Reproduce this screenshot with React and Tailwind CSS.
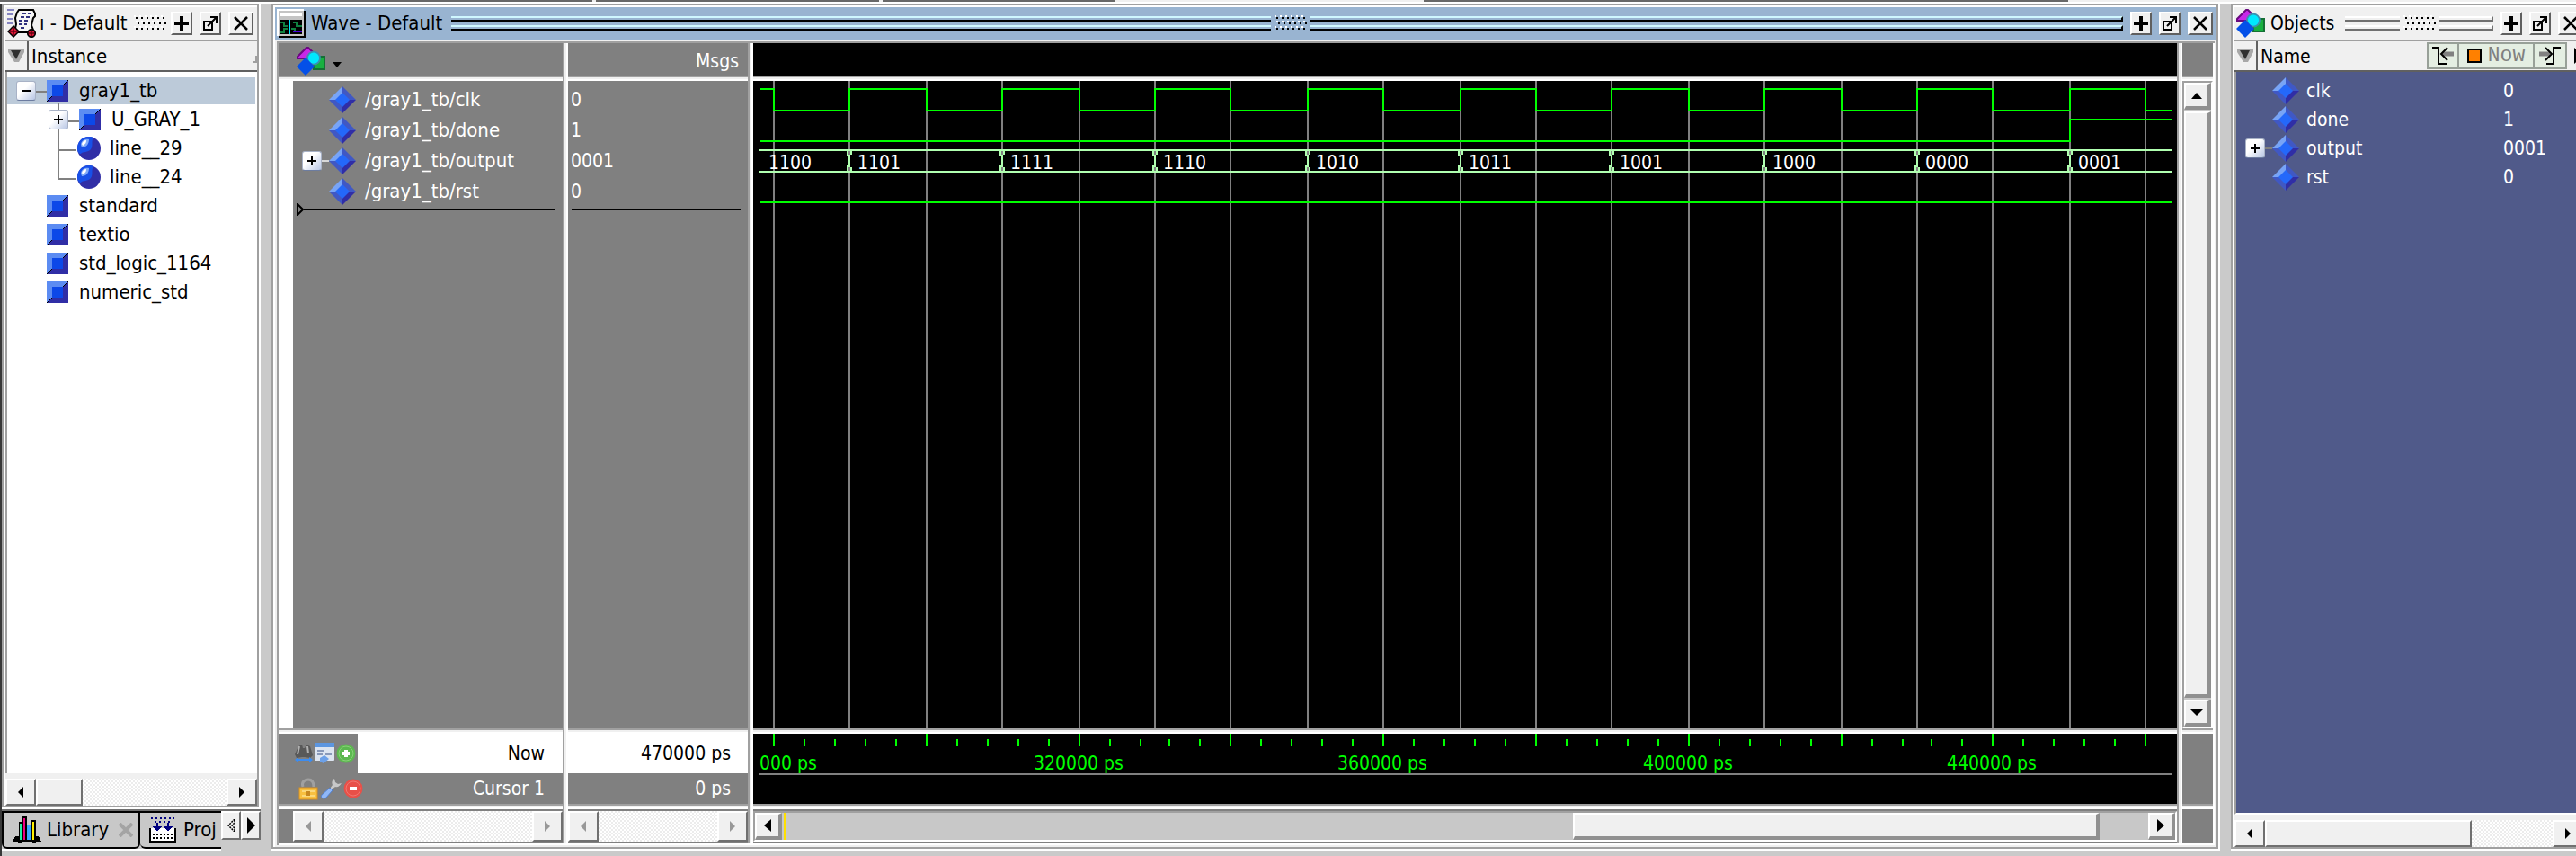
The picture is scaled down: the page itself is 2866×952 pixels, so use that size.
import React from "react";

/* ---------- icons ---------- */

function ShapesIcon() {
  return (
    <svg width="32" height="32" viewBox="0 0 16 16" className="shrink-0">
      <path d="M5.5 .5H6.5L9.5 3.5L6 6.5H.5V5.5Z" fill="#c828e8" stroke="#6a0a80" strokeWidth="1" />
      <rect x="9.5" y="5.5" width="6" height="7" fill="#18b040" stroke="#147034" />
      <circle cx="9.5" cy="6.3" r="3.5" fill="#00e8ff" stroke="#3c90b0" strokeWidth=".9" />
      <path d="M5 6L10 11L5 16L0 11Z" fill="#0450e8" />
    </svg>
  );
}

function Diamond({ className = "" }) {
  return (
    <svg width="30" height="30" viewBox="0 0 30 30" className={"shrink-0 " + className}>
      <path d="M15 0V15H0Z" fill="#78a4f6" />
      <path d="M15 0L30 15H15Z" fill="#4058c4" />
      <path d="M0 15H15V30Z" fill="#4058c4" />
      <path d="M30 15L15 30V15Z" fill="#302ea6" />
      <path d="M15 7L23 15L15 23L7 15Z" fill="#2468fa" />
    </svg>
  );
}

function Block() {
  return (
    <svg width="24" height="24" viewBox="0 0 12 12" className="shrink-0" shapeRendering="crispEdges">
      <rect width="12" height="12" fill="#302ea6" />
      <path d="M0 0H12L0 12Z" fill="#5c8cf2" />
      <path d="M12 0L9 3M0 12L3 9" stroke="#000" strokeWidth=".7" />
      <rect x="3" y="3" width="6" height="6" fill="#0c48e8" />
    </svg>
  );
}

function Ball() {
  return (
    <svg width="26" height="26" viewBox="0 0 26 26" className="shrink-0">
      <circle cx="13" cy="13" r="13" fill="#302ea6" />
      <path d="M13 0C4 0 0 7 0 13C0 17 2 19 4 19C6 16 12 18 15 14C18 10 15 5 18 1C16 0 15 0 13 0Z" fill="#1850e8" />
      <path d="M4 9C4 5 8 2 13 3C13 8 10 12 5 12Z" fill="#80aaf8" />
      <path d="M5 8C6 5 8 4 10 4C10 7 9 8 6 10Z" fill="#fff" />
    </svg>
  );
}

function ExpandBox({ open, label }) {
  return (
    <button
      type="button"
      aria-label={label}
      className="flex size-[22px] shrink-0 items-center justify-center rounded-[3px] border border-[#a8b2c6] border-b-[#6c7ca0] bg-linear-to-br from-white from-40% to-[#b8c6e4]"
    >
      <svg width="10" height="10" viewBox="0 0 10 10">
        <path d={open ? "M0 5H10" : "M0 5H10M5 0V10"} stroke="#000" strokeWidth="2" />
      </svg>
    </button>
  );
}

function SimIcon() {
  return (
    <svg width="32" height="32" viewBox="0 0 32 32" className="shrink-0">
      <path d="M0 1H8M0 6H7M0 11H7M0 16H6" stroke="#8484c0" strokeWidth="2" />
      <path d="M13 1H29L31 5V8L29 10L27 18L30 26H8L10 17L9 10L11 4Z" fill="#f6f6f6" stroke="#000" strokeWidth="2" />
      <path d="M17 5H26M15 9H25M13 13H23M13 17H22M15 21H21" stroke="#303080" strokeWidth="2" strokeDasharray="4 2" />
      <path d="M7 19L13 25L7 31L1 25Z" fill="#e01838" stroke="#000" strokeWidth="1.5" />
      <path d="M7 21V29M3 25H11" stroke="#600010" strokeWidth="1.5" />
      <circle cx="27" cy="27" r="4.2" fill="#e01838" stroke="#000" strokeWidth="1.8" />
      <path d="M27 24V30M24 27H30" stroke="#600010" strokeWidth="1.5" />
    </svg>
  );
}

function WaveIcon() {
  return (
    <svg width="32" height="32" viewBox="0 0 32 32" className="shrink-0" shapeRendering="crispEdges">
      <rect x="2" y="2" width="30" height="30" fill="#000" />
      <rect width="30" height="30" fill="#fff" />
      <rect x="2" y="2" width="28" height="28" fill="#c4c4c4" />
      <rect x="4" y="4" width="24" height="4" fill="#fff" />
      <rect x="4" y="12" width="24" height="16" fill="#000" />
      <path d="M4 15H8V19H12M4 26H8V22H12M18 15H22V19H28M16 22H20V26" stroke="#108040" strokeWidth="2" fill="none" />
      <path d="M18 25H28" stroke="#4800d8" strokeWidth="2" />
      <path d="M14 12V28" stroke="#00e8ff" strokeWidth="2" />
    </svg>
  );
}

function BooksIcon() {
  return (
    <svg width="32" height="30" viewBox="0 0 32 30" className="shrink-0" shapeRendering="crispEdges">
      <path d="M7 22H3L0 28H32L29 22H26V4H20V9H16V0H10V6H7ZM6 28H10V30H6ZM22 28H26V30H22Z" fill="#000" />
      <rect x="8" y="8" width="2" height="18" fill="#20f0a0" />
      <rect x="12" y="2" width="2" height="24" fill="#f00080" />
      <rect x="16" y="10" width="4" height="16" fill="#38a8ff" />
      <rect x="22" y="6" width="2" height="20" fill="#fff000" />
    </svg>
  );
}

function ProjectIcon() {
  return (
    <svg width="30" height="28" viewBox="0 0 30 28" className="shrink-0" shapeRendering="crispEdges">
      <rect x="1" y="12" width="28" height="15" fill="#fff" />
      <path d="M1 12V27H29V12" stroke="#000" strokeWidth="2" fill="none" />
      <path d="M4 19H26M4 23H26" stroke="#000" strokeWidth="2" strokeDasharray="2 2" />
      <path d="M2 1H28M6 5H26" stroke="#000080" strokeWidth="2" strokeDasharray="2 3" />
      <path d="M9 6V12M21 6V12" stroke="#000080" strokeWidth="2" />
      <path d="M4 10H14L9 16ZM16 10H26L21 16Z" fill="#000080" />
    </svg>
  );
}

function SortIcon() {
  return (
    <svg width="18" height="16" viewBox="0 0 18 16" className="shrink-0">
      <path d="M0 1H18V4L12 15H7L0 4Z" fill="#a8a8a8" />
      <path d="M3 2H14L9 12Z" fill="#303030" />
    </svg>
  );
}

function Tri({ dir, fill = "#000" }) {
  const d = {
    left: "M6 0V12L0 6Z",
    right: "M0 0V12L6 6Z",
  }[dir];
  return (
    <svg width="6" height="12" viewBox="0 0 6 12">
      <path d={d} fill={fill} />
    </svg>
  );
}

function BinocularsIcon() {
  return (
    <svg width="20" height="22" viewBox="0 0 20 22" className="shrink-0">
      <path d="M4 3L8 1L9 5L11 5L13 1L17 3L20 13L17 16L11 15H8L2 16L0 12Z" fill="#585858" />
      <path d="M5 3L3 12M14 3L15 11" stroke="#b0b0b0" strokeWidth="2" />
      <path d="M1 18H19" stroke="#3c8cf0" strokeWidth="2" />
      <path d="M0 18L4 15V21ZM20 18L16 15V21Z" fill="#3c8cf0" />
    </svg>
  );
}

function FormIcon() {
  return (
    <svg width="22" height="24" viewBox="0 0 22 24" className="shrink-0">
      <rect width="22" height="20" rx="1" fill="#dce4f0" />
      <rect width="22" height="5" fill="#5c96e0" />
      <path d="M3 9H11M3 13H9M12 13H19" stroke="#8898b8" strokeWidth="2" />
      <path d="M6 17L11 14L16 18L10 23L6 21Z" fill="#6ca0e8" />
    </svg>
  );
}

function RoundIcon({ minus }) {
  return (
    <svg width="22" height="22" viewBox="0 0 22 22" className="shrink-0">
      <circle cx="11" cy="11" r="10.5" fill={minus ? "#e85048" : "#5cb850"} />
      <circle cx="11" cy="11" r="8" fill="none" stroke={minus ? "#f07870" : "#88d078"} strokeWidth="1" />
      {minus ? (
        <rect x="7" y="9" width="8" height="4" fill="#fff" />
      ) : (
        <path d="M9 7H13V9H15V13H13V15H9V13H7V9H9Z" fill="#fff" />
      )}
    </svg>
  );
}

function LockIcon() {
  return (
    <svg width="22" height="25" viewBox="0 0 22 25" className="shrink-0">
      <path d="M5 10C3 5 7 2 11 2C15 2 17 5 17 10" fill="none" stroke="#a0a0a0" strokeWidth="3" />
      <rect x="1" y="11" width="20" height="13" fill="#f8c040" stroke="#d89020" />
      <path d="M4 15H18M4 20H18" stroke="#fbe090" strokeWidth="1.5" />
      <rect x="9" y="15" width="4" height="5" fill="#c88820" />
    </svg>
  );
}

function WrenchIcon() {
  return (
    <svg width="24" height="24" viewBox="0 0 24 24" className="shrink-0">
      <path d="M16 1C13 3 13 6 14 8L11 12L13 13L17 10C20 11 22 9 24 6L20 7L17 5Z" fill="#c8c8c8" />
      <path d="M11 11L14 14L7 22C4 25 0 22 2 19Z" fill="#90b8f8" stroke="#5080d0" />
    </svg>
  );
}

/* ---------- window chrome ---------- */

const windowButtons = [
  ["Add pane", "w-6", <path key="a" d="M9 1V17M1 9H17" stroke="#000" strokeWidth="4" />],
  [
    "Undock",
    "w-6",
    <g key="u" stroke="#000" strokeWidth="2" fill="none">
      <rect x="2" y="7" width="9" height="9" />
      <path d="M6 12L15 3M9 2H16V9" />
    </g>,
  ],
  ["Close", "w-7", <path key="c" d="M2 2L16 16M16 2L2 16" stroke="#000" strokeWidth="2.5" />],
];

function WindowButtons() {
  return (
    <div className="flex shrink-0 gap-2">
      {windowButtons.map(([label, width, glyph]) => (
        <button
          key={label}
          type="button"
          aria-label={label}
          className={
            "flex h-[26px] items-center justify-center border-2 border-white border-r-[#606060] border-b-[#606060] bg-[#f0f0f0] " + width
          }
        >
          <svg width="18" height="18" viewBox="0 0 18 18" className="shrink-0">
            {glyph}
          </svg>
        </button>
      ))}
    </div>
  );
}

function Dots() {
  const xs = [0, 1, 2, 3, 4, 5];
  return (
    <svg width="36" height="18" viewBox="0 0 36 18" className="shrink-0" shapeRendering="crispEdges">
      {[0, 1, 2].map((r) =>
        xs.map((i) => (
          <g key={r + "-" + i}>
            <rect x={i * 6 + (r % 2) * 2} y={r * 6} width="2" height="2" fill="#fff" />
            <rect x={i * 6 + 2 + (r % 2) * 2} y={r * 6 + 2} width="2" height="2" fill="#000" />
          </g>
        ))
      )}
    </svg>
  );
}

function Rails({ active, last }) {
  const tone = active ? "border-t-[#d0f8ff] border-b-black border-r-black" : "border-t-white border-b-[#707070] border-r-[#707070]";
  const line = "h-[6px] border-t-2 border-b-2 " + tone + (last ? " border-r-2" : "");
  return (
    <div className="flex flex-1 flex-col gap-1">
      <div className={line} />
      <div className={line} />
    </div>
  );
}

function Panel({ className = "", children }) {
  return (
    <section className={"flex min-h-0 flex-col border-r-2 border-b-2 border-white " + className}>
      <div className="flex min-h-0 flex-1 flex-col border-2 border-[#a0a0a0]">
        <div className="flex min-h-0 flex-1 flex-col border-t-2 border-l-2 border-white bg-[#f0f0f0]">{children}</div>
      </div>
    </section>
  );
}

function HScroll({ thumb, disabled, label }) {
  const btn =
    "flex w-[34px] shrink-0 items-center justify-center border-2 border-white border-r-[#707070] border-b-[#707070] bg-[#f0f0f0]";
  const fill = disabled ? "#989898" : "#000";
  return (
    <div className="flex h-full w-full bg-[repeating-conic-gradient(#ffffff_0_25%,#ececec_0_50%)] bg-[length:4px_4px]">
      <button type="button" aria-label={label + " left"} disabled={disabled} className={btn}>
        <Tri dir="left" fill={fill} />
      </button>
      <div className="flex flex-1">
        {thumb && <div className={"border-2 border-white border-r-[#707070] border-b-[#707070] bg-[#f0f0f0] " + thumb} />}
      </div>
      <button type="button" aria-label={label + " right"} disabled={disabled} className={btn}>
        <Tri dir="right" fill={fill} />
      </button>
    </div>
  );
}

/* ---------- structure panel ---------- */

const libraries = ["standard", "textio", "std_logic_1164", "numeric_std"];

function StructurePanel() {
  return (
    <div className="flex w-[288px] shrink-0 flex-col text-[22px]">
      <Panel className="flex-1">
        <div className="flex h-9 items-center pr-1 pl-[2px]">
          <SimIcon />
          <h2 className="ml-1 w-[97px] whitespace-nowrap">ı - Default</h2>
          <div className="ml-2">
            <Dots />
          </div>
          <div className="flex-1" />
          <WindowButtons />
        </div>
        <div className="flex h-9 items-center border-t-2 border-b-2 border-t-[#a0a0a0] border-b-[#606060]">
          <div className="flex h-full w-[26px] items-center justify-center border-r-2 border-[#606060]">
            <SortIcon />
          </div>
          <span className="flex-1 pt-[2px] pl-[3px]">Instance</span>
          <svg width="4" height="8" viewBox="0 0 4 8" className="mt-2">
            <path d="M3 0V7H0" stroke="#a0a0a0" strokeWidth="2" fill="none" />
          </svg>
        </div>
        <div className="relative flex flex-1 flex-col gap-[2px] border-l-2 border-[#a0a0a0] bg-white pt-[6px] pr-[2px]">
          <svg width="90" height="130" className="pointer-events-none absolute top-0 left-0" shapeRendering="crispEdges">
            <path d="M32 22H44M57 34V119H76M57 87H76M68 55H80" stroke="#808080" strokeWidth="2" fill="none" />
          </svg>
          <div className="flex h-[30px] items-center gap-3 bg-[#bccad9] pl-[10px]">
            <ExpandBox open label="Collapse gray1_tb" />
            <Block />
            <span>gray1_tb</span>
          </div>
          <div className="flex h-[30px] items-center gap-3 pl-[46px]">
            <div className="relative flex">
              <ExpandBox label="Expand U_GRAY_1" />
            </div>
            <Block />
            <span>U_GRAY_1</span>
          </div>
          {["line__29", "line__24"].map((t) => (
            <div key={t} className="flex h-[30px] items-center gap-[10px] pl-[78px]">
              <Ball />
              <span>{t}</span>
            </div>
          ))}
          {libraries.map((t) => (
            <div key={t} className="flex h-[30px] items-center gap-3 pl-[44px]">
              <Block />
              <span>{t}</span>
            </div>
          ))}
        </div>
        <div className="h-9 shrink-0 pt-[6px]">
          <HScroll label="Scroll structure" thumb="w-[52px]" />
        </div>
      </Panel>
      <div className="flex h-[46px] shrink-0 border-t-2 border-[#707070]">
        <div className="flex min-w-0 flex-1 items-start overflow-hidden border-b-2 border-white">
          <button type="button" className="flex h-[42px] shrink-0 items-center gap-[6px] rounded-b-[6px] border-2 border-black bg-[#c8c8c8] pr-[6px] pl-[10px]">
            <BooksIcon />
            <span className="w-[74px] text-left">Library</span>
            <svg width="16" height="16" viewBox="0 0 16 16">
              <path d="M1 1L15 15M15 1L1 15" stroke="#a4a4a4" strokeWidth="4" />
            </svg>
          </button>
          <button type="button" className="flex h-[42px] flex-1 items-center gap-2 rounded-bl-[6px] border-t-2 border-b-2 border-black bg-[#c8c8c8] pl-[10px]">
            <ProjectIcon />
            <span>Proj</span>
          </button>
        </div>
        {["left", "right"].map((d) => (
          <button
            key={d}
            type="button"
            aria-label={"Scroll tabs " + d}
            className="flex h-8 w-[22px] shrink-0 items-center justify-center border-2 border-white border-r-[#707070] border-b-[#707070] bg-[#f0f0f0]"
          >
            {d === "left" ? (
              <svg width="10" height="14" viewBox="0 0 10 14">
                <path d="M9 0L2 7L9 14V10L6 7L9 4Z" fill="none" stroke="#000" strokeWidth="1.5" strokeDasharray="2 1" />
              </svg>
            ) : (
              <svg width="10" height="18" viewBox="0 0 10 18">
                <path d="M1 0V18L10 9Z" fill="#000" />
              </svg>
            )}
          </button>
        ))}
      </div>
    </div>
  );
}

/* ---------- wave panel ---------- */

const signals = [
  { name: "/gray1_tb/clk", value: "0" },
  { name: "/gray1_tb/done", value: "1" },
  { name: "/gray1_tb/output", value: "0001", bus: true },
  { name: "/gray1_tb/rst", value: "0" },
];

const busValues = ["1100", "1101", "1111", "1110", "1010", "1011", "1001", "1000", "0000", "0001"];
const START = 8;
const END = 1578;

// x of the n-th clock edge on the canvas, snapped to the two-pixel raster
const edge = (n) => 2 * Math.round((24 + 84.8 * n) / 2) - 1;
const edges = Array.from({ length: 19 }, (_, n) => n);

function clockPath() {
  let d = `M${START} 9`;
  edges.forEach((n) => {
    d += `H${edge(n)}V${n % 2 === 0 ? 33 : 9}`;
  });
  return d + `H${END}`;
}

function WaveCanvas() {
  const changes = edges.filter((n) => n % 2 === 1);
  return (
    <svg className="block h-full w-full" shapeRendering="crispEdges" role="img" aria-label="Waveforms">
      {edges.map((n) => (
        <line key={n} x1={edge(n)} x2={edge(n)} y1="0" y2="100%" stroke="#808080" strokeWidth="2" />
      ))}
      <g fill="none" stroke="#00ff00" strokeWidth="2">
        <path d={clockPath()} />
        <path d={`M${START} 67H${edge(17)}V43H${END}`} />
        <path d={`M${START} 135H${END}`} />
      </g>
      <g fill="none" stroke="#b0ffb0" strokeWidth="2">
        <path d={`M6 77H${END}M6 101H${END}`} />
        {changes.map((n) => {
          const x = edge(n);
          return <path key={n} d={`M${x - 2} 77V84M${x + 2} 77V82M${x} 82V96M${x - 2} 94V101M${x + 2} 96V101`} />;
        })}
      </g>
      <g className="fill-white text-[21px]">
        {busValues.map((v, i) => (
          <text key={v} x={i === 0 ? 17 : edge(2 * i - 1) + 9} y="98">
            {v}
          </text>
        ))}
      </g>
    </svg>
  );
}

function TimeScale() {
  const ticks = [];
  for (let i = 0; i <= 45; i++) {
    const x = 2 * Math.round((24 + 33.92 * i) / 2) - 1;
    ticks.push(<line key={i} x1={x} x2={x} y1={i % 5 === 0 ? 0 : 6} y2="14" stroke="#00ff00" strokeWidth="2" />);
  }
  return (
    <svg className="block h-[78px] w-full shrink-0" shapeRendering="crispEdges" role="img" aria-label="Time scale">
      {ticks}
      <line x1="6" x2={END} y1="45" y2="45" stroke="#808080" strokeWidth="2" />
      <g className="fill-[#00ff00] text-[21px]">
        <text x="7" y="40">000 ps</text>
        {["320000 ps", "360000 ps", "400000 ps", "440000 ps"].map((t, i) => (
          <text key={t} x={edge(4 * (i + 1)) - 1} y="40" textAnchor="middle">
            {t}
          </text>
        ))}
      </g>
    </svg>
  );
}

function Sash() {
  return (
    <div className="shrink-0">
      <div className="h-[2px] bg-[#a0a0a0]" />
      <div className="h-[2px] bg-[#f0f0f0]" />
      <div className="h-[2px] bg-white" />
    </div>
  );
}

function VSash() {
  return (
    <div className="flex shrink-0">
      <div className="w-[2px] bg-[#a0a0a0]" />
      <div className="w-[2px] bg-[#f0f0f0]" />
      <div className="w-[2px] bg-white" />
    </div>
  );
}

function Column({ className, head, body, status, scroll }) {
  return (
    <div className={"flex min-h-0 flex-col " + className}>
      <div className="h-9 shrink-0">{head}</div>
      <Sash />
      <div className="min-h-0 flex-1">{body}</div>
      <Sash />
      <div className="h-[78px] shrink-0">{status}</div>
      <Sash />
      <div className="h-[38px] shrink-0">{scroll}</div>
    </div>
  );
}

const raised = "border-t-2 border-l-2 border-r-4 border-b-4 border-t-white border-l-white border-r-[#909090] border-b-[#909090] bg-[#f0f0f0]";

function WavePanel() {
  return (
    <Panel className="min-w-0 flex-1">
      <div className="flex h-9 shrink-0 items-center bg-[#99b4d1] pr-1 pl-[2px]">
        <WaveIcon />
        <h2 className="mr-[10px] ml-[6px] text-[22px] whitespace-nowrap">Wave - Default</h2>
        <Rails active />
        <div className="flex px-1">
          <Dots />
        </div>
        <div className="flex flex-1">
          <Rails active last />
          <div className="w-2" />
        </div>
        <WindowButtons />
      </div>
      <div className="mt-[2px] mr-[2px] mb-[2px] ml-[2px] flex min-h-0 flex-1 border-t-2 border-l-2 border-[#a0a0a0]">
        <div className="flex min-w-0 flex-1 border-r-2 border-b-2 border-white">
          <Column
            className="w-[316px] shrink-0 bg-[#808080] text-white"
            head={
              <button type="button" aria-label="Signal filter" className="flex h-full items-center gap-2 pt-1 pl-5">
                <ShapesIcon />
                <svg width="10" height="6" viewBox="0 0 10 6" className="mt-2">
                  <path d="M0 0H10L5 6Z" fill="#000" />
                </svg>
              </button>
            }
            body={
              <div className="flex h-full">
                <div className="w-4 shrink-0 bg-white" />
                <div className="flex-1 pt-1 text-[22px]">
                  {signals.map((s) => (
                    <div key={s.name} className="flex h-[34px] items-center pl-[10px]">
                      {s.bus ? (
                        <>
                          <ExpandBox label={"Expand " + s.name} />
                          <div className="h-[2px] w-2 bg-[#d8d8d8]" />
                        </>
                      ) : (
                        <div className="w-[30px]" />
                      )}
                      <Diamond className="mr-[10px]" />
                      <span>{s.name}</span>
                    </div>
                  ))}
                  <div className="-mt-1 mr-2 ml-1 flex items-center">
                    <svg width="8" height="14" viewBox="0 0 8 14">
                      <path d="M1 1V13L7 7Z" fill="#808080" stroke="#000" strokeWidth="2" />
                    </svg>
                    <div className="h-[2px] flex-1 bg-black" />
                  </div>
                </div>
              </div>
            }
            status={
              <div className="flex h-full flex-col">
                <div className="flex h-11 items-center bg-white">
                  <div className="flex h-full w-[88px] items-center gap-[2px] bg-[#808080] pl-[18px]">
                    <BinocularsIcon />
                    <FormIcon />
                    <RoundIcon />
                  </div>
                  <span className="flex-1 pr-5 text-right text-black">Now</span>
                </div>
                <div className="flex h-[34px] items-center gap-[2px] pl-[22px]">
                  <LockIcon />
                  <WrenchIcon />
                  <RoundIcon minus />
                  <span className="flex-1 pr-5 text-right">Cursor 1</span>
                </div>
              </div>
            }
            scroll={
              <div className="h-full py-[2px] pl-4">
                <HScroll disabled label="Scroll names" />
              </div>
            }
          />
          <VSash />
          <Column
            className="w-[200px] shrink-0 bg-[#808080] text-white"
            head={<div className="flex h-full items-center justify-end pt-1 pr-[10px]">Msgs</div>}
            body={
              <div className="pt-1">
                {signals.map((s) => (
                  <div key={s.name} className="flex h-[34px] items-center pl-[3px]">
                    {s.value}
                  </div>
                ))}
                <div className="mt-[2px] mr-2 ml-1 h-[2px] bg-black" />
              </div>
            }
            status={
              <div className="text-right">
                <div className="flex h-11 items-center justify-end bg-white pr-[19px] text-black">470000 ps</div>
                <div className="flex h-[34px] items-center justify-end pr-[19px]">0 ps</div>
              </div>
            }
            scroll={
              <div className="h-full py-[2px]">
                <HScroll disabled label="Scroll values" />
              </div>
            }
          />
          <VSash />
          <Column
            className="min-w-0 flex-1 bg-black"
            body={<WaveCanvas />}
            status={<TimeScale />}
            scroll={
              <div className="flex h-full border-t-2 border-b-2 border-[#808080]">
                <div className="flex flex-1 border-2 border-t-[#a0a0a0] border-r-white border-b-white border-l-[#a0a0a0] bg-[#c8c8c8]">
                  <button type="button" aria-label="Scroll wave left" className={"flex w-[30px] items-center justify-center " + raised}>
                    <svg width="8" height="14" viewBox="0 0 8 14">
                      <path d="M8 0V14L0 7Z" />
                    </svg>
                  </button>
                  <div className="flex flex-1">
                    <div className="ml-[2px] w-[2px] bg-[#ffe000]" />
                    <div className="w-[57.6%]" />
                    <div className={"w-[38.6%] " + raised} />
                  </div>
                  <button type="button" aria-label="Scroll wave right" className={"flex w-[30px] items-center justify-center " + raised}>
                    <svg width="8" height="14" viewBox="0 0 8 14">
                      <path d="M0 0V14L8 7Z" />
                    </svg>
                  </button>
                </div>
              </div>
            }
          />
          <VSash />
          <Column
            className="w-[34px] shrink-0 bg-[#808080]"
            body={
              <div className="flex h-full flex-col gap-[2px] border-2 border-t-[#a0a0a0] border-r-white border-b-white border-l-[#a0a0a0] bg-[#c8c8c8]">
                <button type="button" aria-label="Scroll up" className={"flex h-[30px] shrink-0 items-center justify-center " + raised}>
                  <svg width="12" height="8" viewBox="0 0 12 8">
                    <path d="M0 8H12L6 1Z" />
                  </svg>
                </button>
                <div className={"flex-1 " + raised} />
                <button type="button" aria-label="Scroll down" className={"flex h-[30px] shrink-0 items-center justify-center " + raised}>
                  <svg width="16" height="8" viewBox="0 0 16 8">
                    <path d="M0 0H16L8 8Z" />
                  </svg>
                </button>
              </div>
            }
          />
        </div>
      </div>
    </Panel>
  );
}

/* ---------- objects panel ---------- */

const objects = [
  { name: "clk", value: "0" },
  { name: "done", value: "1" },
  { name: "output", value: "0001", bus: true },
  { name: "rst", value: "0" },
];

function ObjectsPanel() {
  return (
    <Panel className="-mr-3 w-[396px] shrink-0">
      <div className="flex h-9 shrink-0 items-center pl-[2px]">
        <ShapesIcon />
        <h2 className="mr-3 ml-[6px]">Objects</h2>
        <Rails />
        <div className="flex px-1">
          <Dots />
        </div>
        <Rails last />
        <div className="w-2" />
        <WindowButtons />
      </div>
      <div className="flex h-9 shrink-0 items-center border-t-2 border-b-2 border-t-[#a0a0a0] border-b-[#606060]">
        <div className="flex h-full w-[26px] items-center justify-center border-r-2 border-[#606060]">
          <SortIcon />
        </div>
        <span className="flex-1 pt-[2px] pl-[3px]">Name</span>
        <div className="flex h-[30px] items-stretch border-2 border-[#98a098] bg-[#e4eee2]">
          <button type="button" aria-label="Previous time" className="flex w-[34px] items-center justify-center border-r-2 border-[#98a098]">
            <svg width="26" height="24" viewBox="0 0 26 24">
              <path d="M1 3H8V21H18" fill="none" stroke="#000" strokeWidth="2" />
              <path d="M25 10H12" stroke="#808080" strokeWidth="5" />
              <path d="M18 3L11 10L18 17" fill="none" stroke="#000" strokeWidth="2" />
            </svg>
          </button>
          <button type="button" className="flex w-[84px] items-center justify-center gap-[7px] border-r-2 border-[#98a098] font-['Liberation_Mono',monospace] text-[23px] text-[#808080]">
            <span className="size-4 border-2 border-black bg-[#ff8000]" />
            Now
          </button>
          <button type="button" aria-label="Next time" className="flex w-[34px] items-center justify-center">
            <svg width="26" height="24" viewBox="0 0 26 24">
              <path d="M9 21H17V3H25" fill="none" stroke="#000" strokeWidth="2" />
              <path d="M1 10H13" stroke="#808080" strokeWidth="5" />
              <path d="M8 3L15 10L8 17" fill="none" stroke="#000" strokeWidth="2" />
            </svg>
          </button>
        </div>
        <svg width="10" height="20" viewBox="0 0 10 20" className="ml-2">
          <path d="M0 1V19L10 10Z" />
        </svg>
      </div>
      <div className="flex flex-1 flex-col border-b-2 border-l-2 border-b-white border-l-[#a0a0a0] bg-[#505a8a] pt-[5px] text-white">
        {objects.map((o) => (
          <div key={o.name} className="flex h-8 items-center pl-[10px]">
            {o.bus ? (
              <>
                <ExpandBox label={"Expand " + o.name} />
                <div className="h-[2px] w-2 bg-[#808080]" />
              </>
            ) : (
              <div className="w-[30px]" />
            )}
            <Diamond className="mr-2" />
            <span className="w-[219px]">{o.name}</span>
            <span>{o.value}</span>
          </div>
        ))}
      </div>
      <div className="h-9 shrink-0 pt-[6px]">
        <HScroll label="Scroll objects" thumb="w-[230px]" />
      </div>
    </Panel>
  );
}

export default function App() {
  return (
    <main className="flex h-screen min-h-[480px] flex-col overflow-hidden bg-[#cacaca] font-['DejaVu_Sans_Condensed','Noto_Sans',sans-serif] text-[21px] leading-7 text-black">
      <div className="flex h-1 shrink-0 border-b-2 border-white bg-[#f0f0f0]">
        <div className="w-[23%] bg-[#686868]" />
        <div className="ml-1 w-[11%] bg-[#686868]" />
        <div className="ml-1 w-[9%] bg-[#686868]" />
        <div className="ml-[12%] w-[25%] bg-[#686868]" />
      </div>
      <div className="flex min-h-0 flex-1 border-l-2 border-[#383838]">
        <div className="flex min-w-0 flex-1 gap-3 pb-[6px]">
          <StructurePanel />
          <WavePanel />
          <ObjectsPanel />
        </div>
      </div>
    </main>
  );
}
